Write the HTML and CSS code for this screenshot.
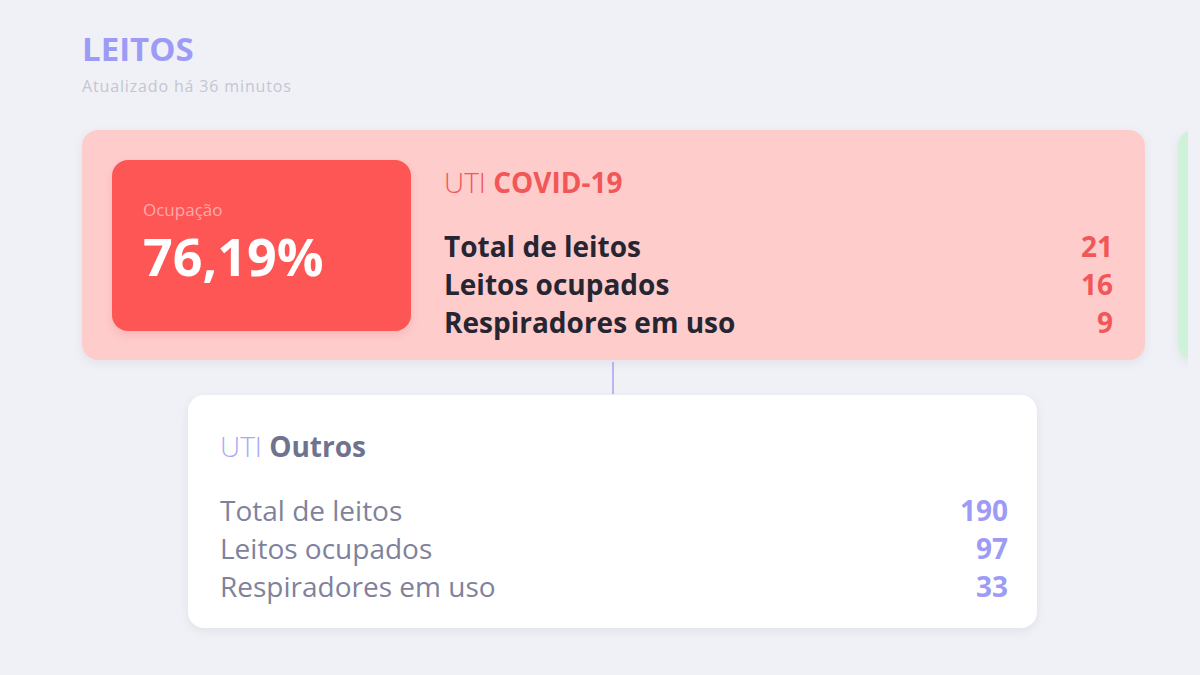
FILE: index.html
```html
<!DOCTYPE html>
<html lang="pt-BR">
<head>
<meta charset="utf-8">
<title>Leitos</title>
<link rel="stylesheet" href="styles.css">
</head>
<body>
<main class="page">
  <header class="head">
    <h1 class="title">LEITOS</h1>
    <p class="updated">Atualizado há 36 minutos</p>
  </header>

  <div class="cards">
    <section class="card card-red">
      <div class="occ">
        <span class="occ-label">Ocupação</span>
        <span class="occ-value">76,19%</span>
      </div>
      <div class="info">
        <h2 class="info-title"><span class="light">UTI</span> <b>COVID-19</b></h2>
        <ul class="rows">
          <li class="row"><span>Total de leitos</span><span class="num">21</span></li>
          <li class="row"><span>Leitos ocupados</span><span class="num">16</span></li>
          <li class="row"><span>Respiradores em uso</span><span class="num">9</span></li>
        </ul>
      </div>
    </section>
    <section class="card card-green"></section>
  </div>

  <div class="connector"></div>

  <section class="other">
    <h2 class="other-title"><span class="light">UTI</span> <b>Outros</b></h2>
    <ul class="rows other-rows">
      <li class="row"><span>Total de leitos</span><span class="num">190</span></li>
      <li class="row"><span>Leitos ocupados</span><span class="num">97</span></li>
      <li class="row"><span>Respiradores em uso</span><span class="num">33</span></li>
    </ul>
  </section>
</main>
</body>
</html>
```

FILE: styles.css
```css
* { box-sizing: border-box; }
html, body { margin: 0; padding: 0; }
body {
  background: #f0f1f6;
  font-family: "Open Sans", "Noto Sans", sans-serif;
  width: 1200px;
  height: 675px;
  overflow: hidden;
}
.page {
  padding: 29px 0 0 82px;
}
.title {
  margin: 0;
  font-size: 33px;
  line-height: 40px;
  font-weight: 700;
  color: #9d9bf6;
}
.updated {
  margin: 7px 0 0 0;
  font-size: 16px;
  line-height: 20px;
  letter-spacing: 0.85px;
  color: #c4c5d3;
}
.cards {
  display: flex;
  gap: 33px;
  width: 1118px;
  overflow: hidden;
  margin: 22px 0 -12px -12px;
  padding: 12px 0 12px 12px;
}
.card {
  flex-shrink: 0;
  height: 230px;
  border-radius: 16px;
  box-shadow: 0 3px 10px rgba(120, 120, 150, 0.12);
}
.card-red {
  width: 1063px;
  background: #ffcccc;
  display: flex;
  padding: 30px 32px 29px 30px;
}
.card-green {
  width: 200px;
  background: #cff2d8;
}
.occ {
  width: 299px;
  height: 171px;
  background: #fe5555;
  border-radius: 16px;
  box-shadow: 0 4px 10px rgba(200, 60, 60, 0.15);
  display: flex;
  flex-direction: column;
  padding: 39px 0 0 31px;
}
.occ-label {
  font-size: 17px;
  line-height: 22px;
  color: #ffabab;
}
.occ-value {
  margin-top: 8px;
  font-size: 52px;
  line-height: 54px;
  font-weight: 700;
  color: #ffffff;
}
.info {
  flex: 1;
  margin-left: 33px;
  display: flex;
  flex-direction: column;
}
.info-title {
  margin: 6px 0 0 0;
  font-size: 28px;
  line-height: 32px;
  font-weight: 400;
  color: #f25757;
}
.info-title .light { font-weight: 300; }
.info-title b { font-weight: 700; }
.rows {
  list-style: none;
  margin: 0;
  padding: 0;
}
.card-red .rows { margin-top: 29px; }
.row {
  display: flex;
  justify-content: space-between;
  font-size: 28px;
  line-height: 38px;
}
.card-red .row {
  font-weight: 700;
  color: #262633;
}
.card-red .num { color: #f25757; }

.connector {
  width: 2px;
  height: 32px;
  background: #b9b8f2;
  margin: 2px 0 0 530px;
}
.other {
  width: 849px;
  height: 233px;
  margin: 1px 0 0 106px;
  background: #ffffff;
  border-radius: 16px;
  box-shadow: 0 3px 10px rgba(120, 120, 150, 0.12);
  padding: 34px 29px 0 32px;
}
.other-title {
  margin: 0;
  font-size: 28px;
  line-height: 34px;
  font-weight: 400;
}
.other-title .light { font-weight: 300; color: #aaa8f6; }
.other-title b { font-weight: 700; color: #6f7390; }
.other-rows { margin-top: 28px; }
.other .row {
  color: #7f829c;
  font-weight: 400;
}
.other .num {
  color: #9d9bf6;
  font-weight: 700;
}
```
